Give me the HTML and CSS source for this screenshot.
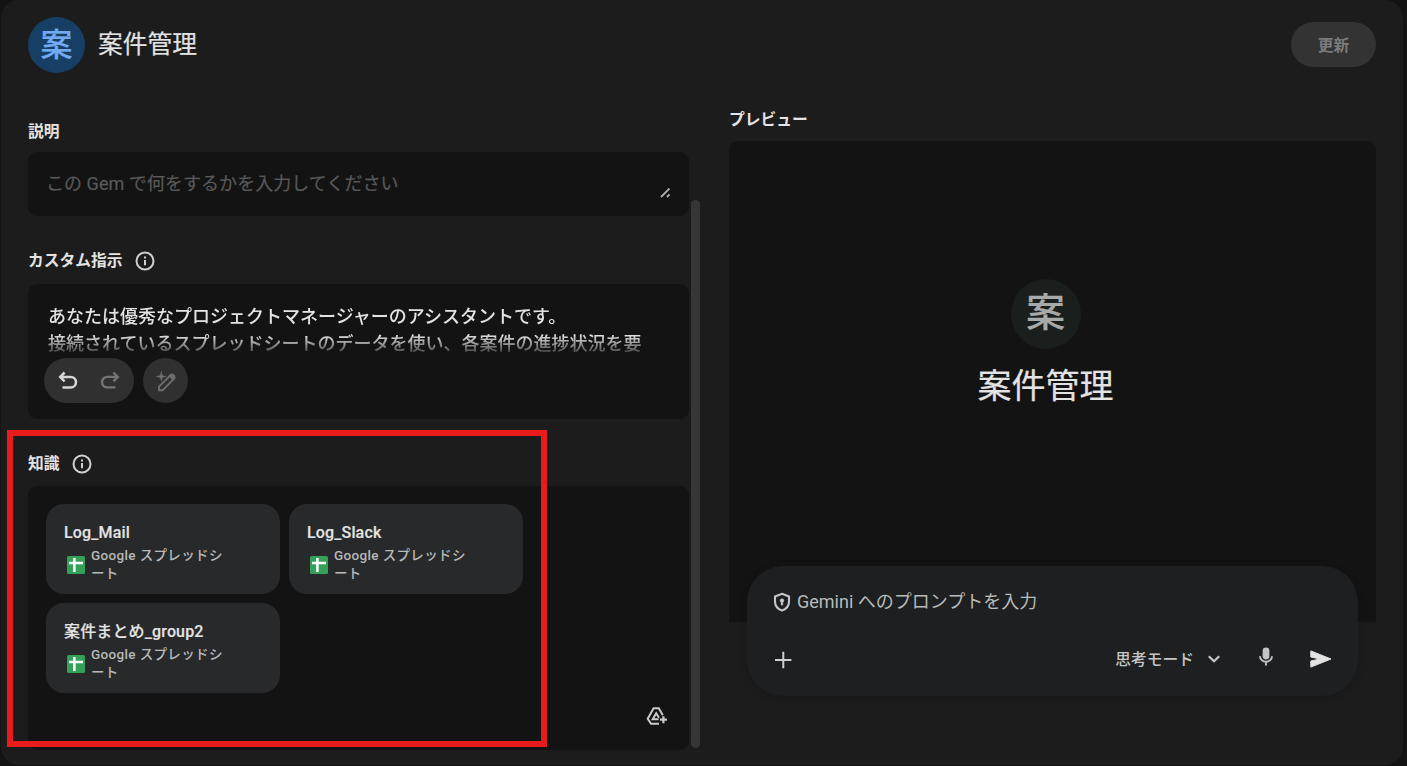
FILE: index.html
```html
<!DOCTYPE html>
<html lang="ja">
<head>
  <meta charset="UTF-8" />
  <meta name="viewport" content="width=device-width, initial-scale=1.0"/>
  <title>案件管理</title>
  <link rel="stylesheet" href="styles.css">
</head>
<body>

  <div class="panel">
    <header class="header">
      <div class="avatar">案</div>
      <h1>案件管理</h1>
      <button class="update-btn" disabled>更新</button>
    </header>

    <main class="columns">
      <div class="editor">
        <div class="form">
          <div class="label">説明</div>
          <div class="field description">
            <span>この Gem で何をするかを入力してください</span>
            <svg class="resizer" width="10" height="10" viewBox="0 0 10 10">
              <path d="M1 9L9.5 .5M7 9L9.5 6.5" stroke="#b0b0b0" stroke-width="1.8"/>
            </svg>
          </div>

          <div class="label label-custom">
            カスタム指示
            <svg width="20" height="20" viewBox="0 0 20 20" fill="none" stroke="#d0d0d0">
              <circle cx="10" cy="10" r="8.5" stroke-width="2"/>
              <path d="M10 9v5.2M10 5.6v2" stroke-width="2"/>
            </svg>
          </div>
          <div class="field instructions">
            <div class="instructions-text">あなたは優秀なプロジェクトマネージャーのアシスタントです。<br>接続されているスプレッドシートのデータを使い、各案件の進捗状況を要</div>
            <div class="tools">
              <div class="undo-redo">
                <svg width="20" height="20" viewBox="0 0 20 20" fill="none" stroke="#d6d6d6" stroke-width="2.5">
                  <path d="M6.6 1.5L2.2 5.9l4.4 4.4M2.4 5.9h10.3a5.2 5.2 0 0 1 0 10.5H4.5"/>
                </svg>
                <svg width="20" height="20" viewBox="0 0 20 20" fill="none" stroke="#757575" stroke-width="2.4">
                  <path d="M13.4 1.5l4.4 4.4-4.4 4.4M17.6 5.9H7.3a5.2 5.2 0 0 0 0 10.5h8.2"/>
                </svg>
              </div>
              <div class="magic">
                <svg width="22" height="22" viewBox="0 0 22 22">
                  <path d="M6.3 0.2L7.5 5.2 11.6 6.4 7.5 7.7 6.3 12 5.1 7.7 0.4 6.4 5.1 5.2z" fill="#6d6d6d"/>
                  <path d="M4 20.3v-3.6L15.7 5a1.6 1.6 0 0 1 2.3 0l1.2 1.2a1.6 1.6 0 0 1 0 2.3L7.5 20.3z" fill="none" stroke="#6d6d6d" stroke-width="1.9"/>
                  <path d="M14 6.5L16.5 4.2h2L20 5.8v2L17.6 10.2z" fill="#6d6d6d"/>
                </svg>
              </div>
            </div>
          </div>

          <div class="label label-knowledge">
            知識
            <svg width="20" height="20" viewBox="0 0 20 20" fill="none" stroke="#d0d0d0">
              <circle cx="10" cy="10" r="8.5" stroke-width="2"/>
              <path d="M10 9v5.2M10 5.6v2" stroke-width="2"/>
            </svg>
          </div>
          <div class="field knowledge">
            <div class="files">
              <div class="file">
                <div class="file-name">Log_Mail</div>
                <div class="file-type">
                  <svg width="18" height="18" viewBox="0 0 18 18">
                    <rect width="18" height="18" rx="1.5" fill="#34a058"/>
                    <path d="M2 7h14M7.4 2v14" stroke="#fff" stroke-width="2.5"/>
                  </svg>
                  <span>Google スプレッドシ<br>ート</span>
                </div>
              </div>
              <div class="file">
                <div class="file-name">Log_Slack</div>
                <div class="file-type">
                  <svg width="18" height="18" viewBox="0 0 18 18">
                    <rect width="18" height="18" rx="1.5" fill="#34a058"/>
                    <path d="M2 7h14M7.4 2v14" stroke="#fff" stroke-width="2.5"/>
                  </svg>
                  <span>Google スプレッドシ<br>ート</span>
                </div>
              </div>
              <div class="file">
                <div class="file-name">案件まとめ_group2</div>
                <div class="file-type">
                  <svg width="18" height="18" viewBox="0 0 18 18">
                    <rect width="18" height="18" rx="1.5" fill="#34a058"/>
                    <path d="M2 7h14M7.4 2v14" stroke="#fff" stroke-width="2.5"/>
                  </svg>
                  <span>Google スプレッドシ<br>ート</span>
                </div>
              </div>
            </div>
            <!-- add from drive -->
            <svg class="drive-add" width="22" height="20" viewBox="0 0 22 20" fill="none" stroke="#cacaca" stroke-width="2">
              <path d="M13 17.8H5L1.7 12.7 7.6 2.2h5.2l4 7"/>
              <path d="M12.5 13.2H6.7L10.2 7.2l2.8 4.6"/>
              <path d="M17.4 10.2v7M13.9 13.7h7" stroke-width="2.2"/>
            </svg>
          </div>
        </div>
        <div class="scrollbar"></div>
      </div>

      <div class="preview">
        <div class="label">プレビュー</div>
        <div class="preview-box">
          <div class="preview-avatar">案</div>
          <div class="preview-name">案件管理</div>
        </div>
        <div class="prompt">
          <div class="prompt-input">
            <svg width="18" height="20" viewBox="0 0 18 20">
              <path d="M9 1.8l7 2.6v5.2c0 4.3-2.8 7.6-7 9-4.2-1.4-7-4.7-7-9V4.4z" fill="none" stroke="#c4c7c5" stroke-width="2.1"/>
              <circle cx="9" cy="8.5" r="2.1" fill="#c4c7c5"/>
              <path d="M9 8v5.3" stroke="#c4c7c5" stroke-width="2.2"/>
            </svg>
            <span>Gemini へのプロンプトを入力</span>
          </div>
          <div class="prompt-actions">
            <svg width="18" height="18" viewBox="0 0 18 18">
              <path d="M9.3 .8v16.4M1 9h16.4" stroke="#cfcfcf" stroke-width="2"/>
            </svg>
            <span class="mode">思考モード</span>
            <svg class="chevron" width="12" height="8" viewBox="0 0 12 8">
              <path d="M.8 1.2L6 6.2l5.2-5" fill="none" stroke="#c8c8c8" stroke-width="2.2"/>
            </svg>
            <svg class="mic" width="14" height="19" viewBox="0 0 14 19">
              <rect x="3.6" y="0.5" width="6.8" height="12" rx="3.4" fill="#c4c4c4"/>
              <path d="M1 9.2a6 5.6 0 0 0 12 0M7 14.8v3.7" fill="none" stroke="#c4c4c4" stroke-width="1.9"/>
            </svg>
            <svg class="send" width="22" height="18" viewBox="0 0 22 18">
              <path d="M.8.9L21 9 .8 17.1V11L10 9 .8 7z" fill="#e3e3e3" stroke="#e3e3e3" stroke-linejoin="round"/>
            </svg>
          </div>
        </div>
      </div>
    </main>
  </div>

  <div class="highlight"></div>

</body>
</html>
```
FILE: styles.css
```css
* {
  box-sizing: border-box;
}

body {
  margin: 0;
  height: 766px;
  overflow: hidden;
  background-color: #131314;
  color: #e3e3e3;
  font-family: Roboto, "Noto Sans CJK JP", sans-serif;
  font-weight: 500;
}

svg {
  display: block;
  flex-shrink: 0;
}

.panel {
  width: 1402px;
  height: 765px;
  margin-left: 1px;
  padding: 0 27px;
  background-color: #1c1c1c;
  border-radius: 18px;
}

.header {
  display: flex;
  align-items: center;
  height: 89px;
}

.avatar {
  width: 57px;
  height: 56px;
  border-radius: 50%;
  background-color: #173e64;
  color: #72aaf0;
  font-size: 32px;
  line-height: 56px;
  text-align: center;
  -webkit-text-stroke: 0.2px;
}

h1 {
  margin: 0 0 0 13px;
  font-size: 24.75px;
  font-weight: 400;
  line-height: 36px;
  -webkit-text-stroke: 0.2px;
}

.update-btn {
  width: 85px;
  height: 45px;
  margin-left: auto;
  padding-bottom: 2px;
  border: none;
  border-radius: 23px;
  background-color: #333;
  color: #7c7c7c;
  font: inherit;
  font-size: 15.75px;
  font-weight: 700;
}

.columns {
  display: flex;
  justify-content: space-between;
}

.editor {
  display: flex;
  gap: 2px;
}

.form {
  width: 661px;
  padding-top: 32px;
}

.label {
  display: flex;
  align-items: center;
  gap: 12px;
  height: 22px;
  font-size: 15.75px;
  font-weight: 700;
  line-height: 20px;
}

.field {
  background-color: #131313;
  border-radius: 9px;
}

.description {
  display: flex;
  justify-content: space-between;
  height: 64px;
  margin-top: 9px;
  padding: 18px 19px 18px 18px;
  color: #595959;
  font-size: 18px;
  font-weight: 400;
  line-height: 27px;
  -webkit-text-stroke: 0.2px;
}

.description span {
  letter-spacing: 0.05px;
}

.resizer {
  align-self: flex-end;
}

.label-custom {
  margin-top: 34px;
}

.instructions {
  height: 135px;
  margin-top: 12px;
  padding: 19px 16px 18px;
}

.instructions-text {
  height: 53px;
  padding-left: 4px;
  overflow: hidden;
  font-size: 18px;
  line-height: 27px;
  white-space: nowrap;
  -webkit-mask-image: linear-gradient(#000 32px, transparent 56px);
  mask-image: linear-gradient(#000 32px, transparent 56px);
}

.tools {
  display: flex;
  gap: 9px;
  margin-top: 2px;
}

.undo-redo {
  display: flex;
  align-items: center;
  justify-content: space-between;
  width: 90px;
  height: 45px;
  padding: 0 14px;
  border-radius: 23px;
  background-color: #303030;
}

.magic {
  display: flex;
  align-items: center;
  justify-content: center;
  width: 45px;
  height: 45px;
  border-radius: 50%;
  background-color: #303030;
}

.label-knowledge {
  margin-top: 34px;
}

.knowledge {
  display: flex;
  flex-direction: column;
  justify-content: space-between;
  height: 264px;
  margin-top: 11px;
  padding: 18px 18px 24px;
}

.files {
  display: flex;
  flex-wrap: wrap;
  gap: 9px;
}

.file {
  width: 234px;
  height: 90px;
  padding: 18px;
  border-radius: 18px;
  background-color: #28292b;
}

.file-name {
  height: 24px;
  font-size: 16px;
  letter-spacing: 0.15px;
  line-height: 22px;
  -webkit-text-stroke: 0.15px;
}

.file-type {
  display: flex;
  align-items: center;
  gap: 6px;
  padding-left: 3px;
  color: #b8bab9;
  font-size: 13.5px;
  letter-spacing: 0.35px;
  line-height: 18px;
}

.file-type svg {
  margin-top: 2px;
}

.drive-add {
  align-self: flex-end;
  margin-right: 3px;
}

.scrollbar {
  width: 9px;
  height: 548px;
  margin-top: 111px;
  border-radius: 5px;
  background-color: #353638;
}

.preview {
  width: 647px;
  padding-top: 20px;
}

.preview-box {
  display: flex;
  flex-direction: column;
  align-items: center;
  height: 481px;
  margin-top: 10px;
  padding: 138px 14px 0 0;
  border-radius: 9px 9px 0 0;
  background-color: #131313;
}

.preview-avatar {
  width: 70px;
  height: 70px;
  border-radius: 50%;
  background-color: #1a1e1d;
  color: #a8aaa9;
  font-size: 39px;
  line-height: 69px;
  text-align: center;
  -webkit-text-stroke: 0.2px;
}

.preview-name {
  margin-top: 12px;
  font-size: 34px;
  font-weight: 400;
  line-height: 50px;
  -webkit-text-stroke: 0.2px;
}

/* the prompt sticks out below the preview */
.prompt {
  position: relative;
  width: 611px;
  height: 130px;
  margin: -56px 18px 0;
  padding: 22px 27px;
  border-radius: 36px;
  background-color: #1e1f20;
  box-shadow: 0 2px 8px rgba(0,0,0,0.15);
}

.prompt-input {
  display: flex;
  align-items: center;
  gap: 6px;
  height: 26px;
  margin-left: -1px;
  color: #b9bbba;
  font-size: 18px;
  font-weight: 400;
  line-height: 22px;
}

.prompt-input span {
  padding-top: 1px;
}

.prompt-input svg {
  margin-top: 2px;
}

.prompt-actions {
  display: flex;
  align-items: center;
  height: 26px;
  margin-top: 33px;
  color: #c4c7c5;
}

.mode {
  margin-left: auto;
  padding-bottom: 3px;
  font-size: 15.75px;
}

.chevron {
  margin: -2px 1px 0 14px;
}

.mic {
  margin: -7px 0 0 38px;
}

.send {
  margin: -2px -1px 0 37px;
}

/* red frame round the knowledge section */
.highlight {
  position: absolute;
  left: 7px;
  top: 430px;
  width: 540px;
  height: 317px;
  border: 6px solid #e81c1c;
}
```
